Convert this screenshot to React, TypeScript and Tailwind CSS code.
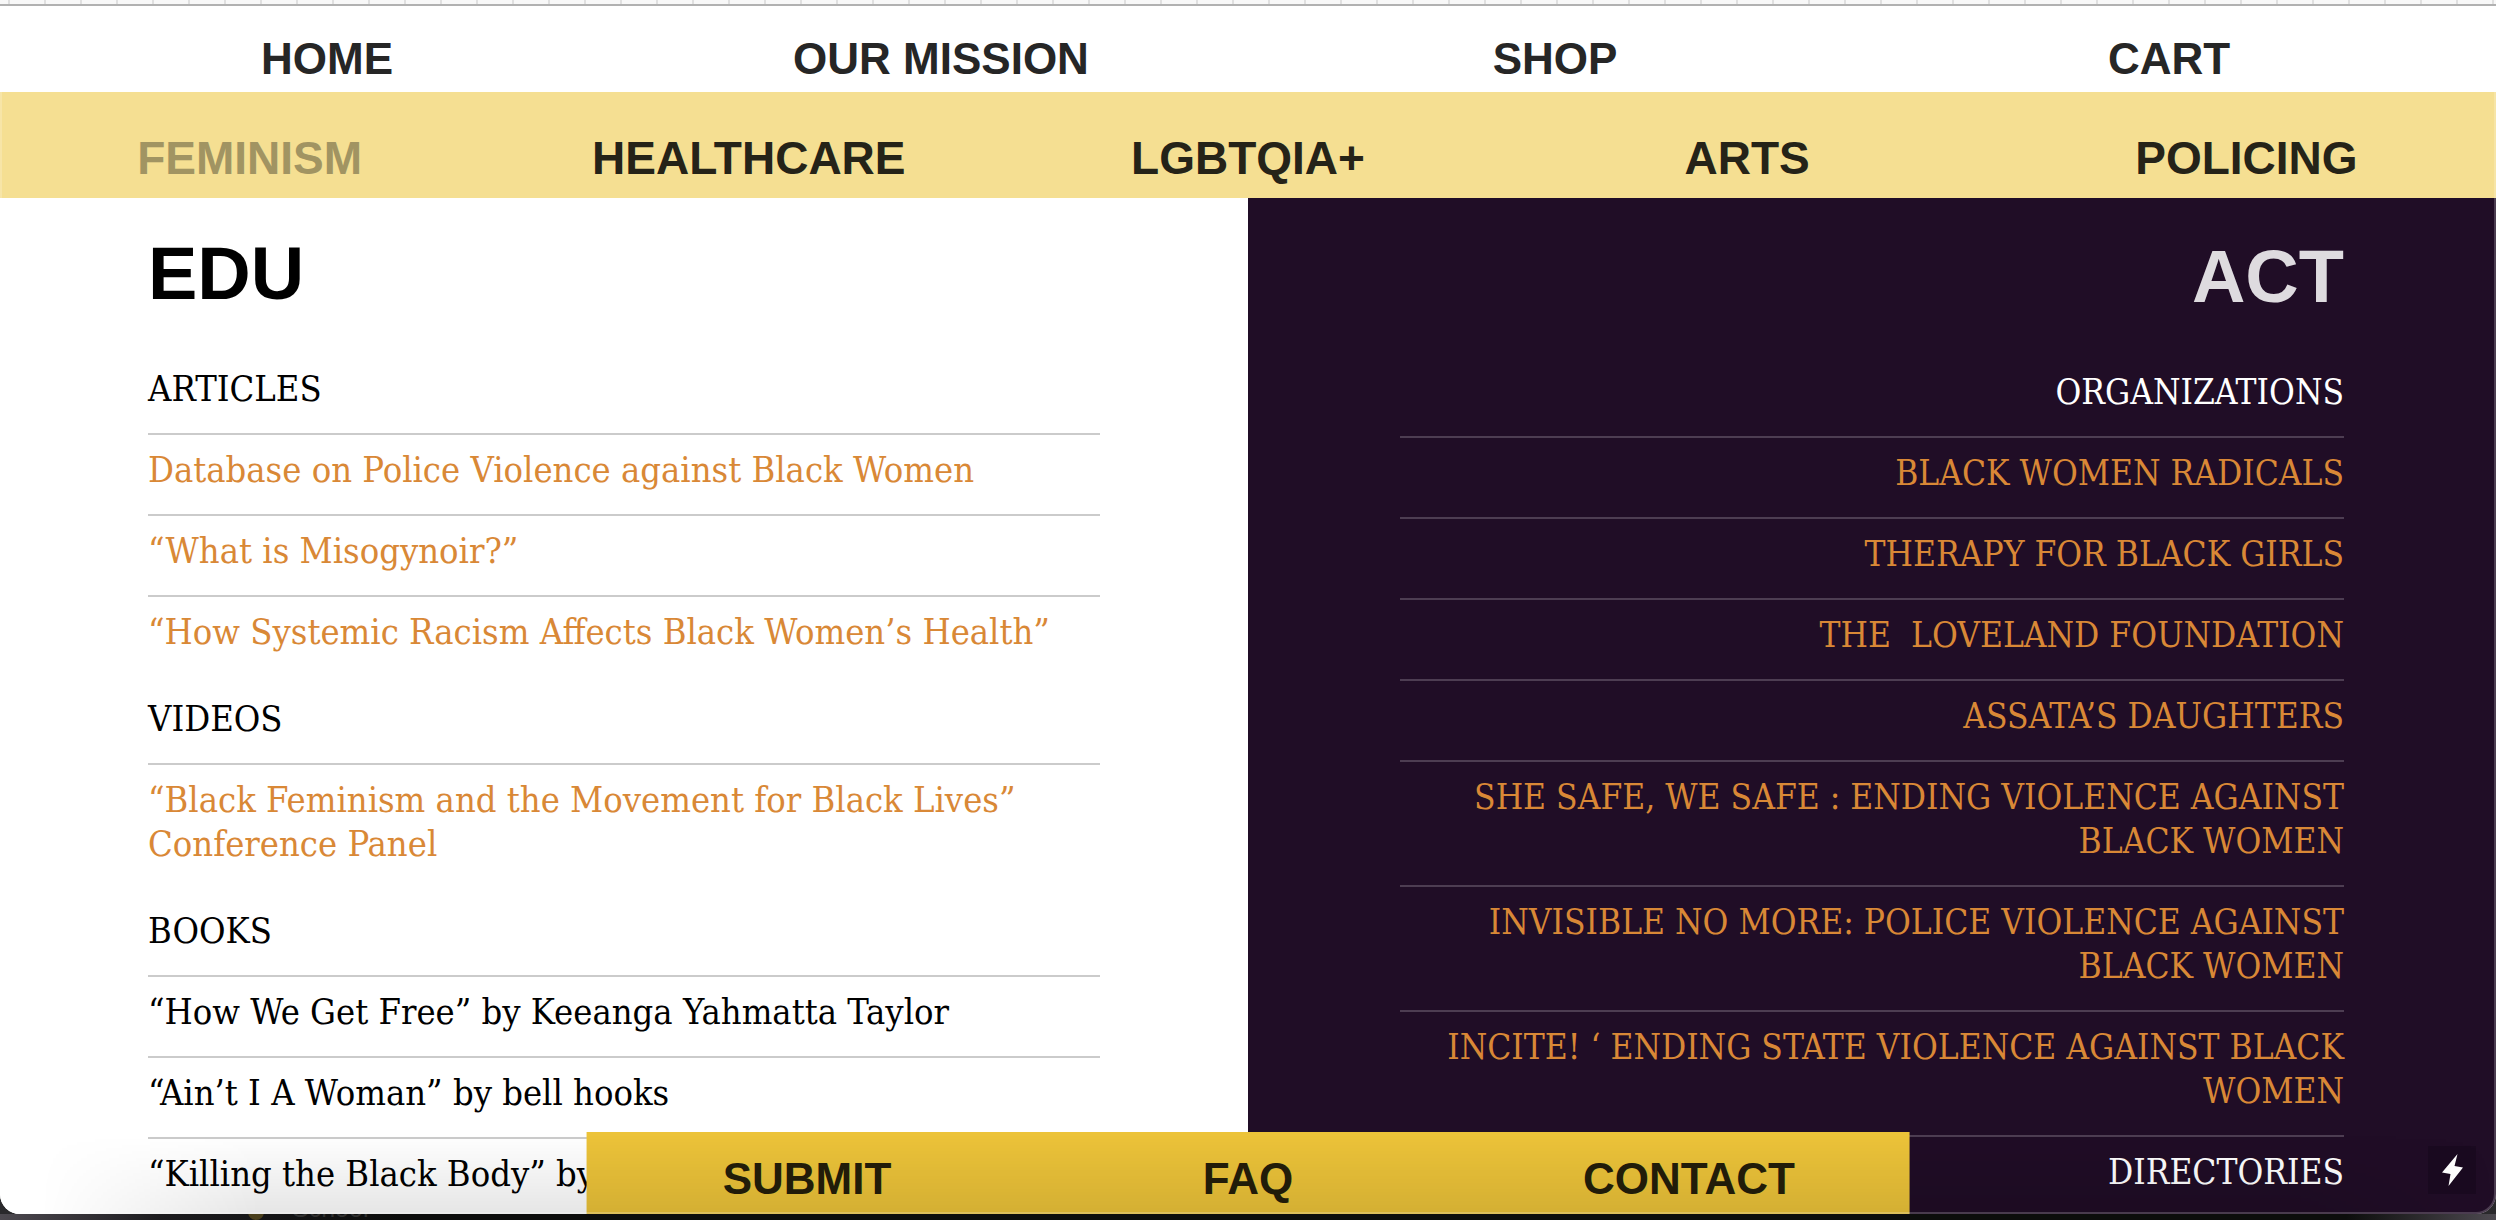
const mainLinks = ["HOME", "OUR MISSION", "SHOP", "CART"];
const topics = ["FEMINISM", "HEALTHCARE", "LGBTQIA+", "ARTS", "POLICING"];
const footerLinks = ["SUBMIT", "FAQ", "CONTACT"];

type Item = { text: string; kind?: "link" | "plain" };

const eduSections: { title: string; items: Item[] }[] = [
  {
    title: "ARTICLES",
    items: [
      { text: "Database on Police Violence against Black Women", kind: "link" },
      { text: "“What is Misogynoir?”", kind: "link" },
      { text: "“How Systemic Racism Affects Black Women’s Health”", kind: "link" },
    ],
  },
  {
    title: "VIDEOS",
    items: [{ text: "“Black Feminism and the Movement for Black Lives” Conference Panel", kind: "link" }],
  },
  {
    title: "BOOKS",
    items: [
      { text: "“How We Get Free” by Keeanga Yahmatta Taylor" },
      { text: "“Ain’t I A Woman” by bell hooks" },
      { text: "“Killing the Black Body” by" },
    ],
  },
];

const actSections: { title: string; items: Item[] }[] = [
  {
    title: "ORGANIZATIONS",
    items: [
      { text: "BLACK WOMEN RADICALS", kind: "link" },
      { text: "THERAPY FOR BLACK GIRLS", kind: "link" },
      { text: "THE \u00a0LOVELAND FOUNDATION", kind: "link" },
      { text: "ASSATA’S DAUGHTERS", kind: "link" },
      { text: "SHE SAFE, WE SAFE : ENDING VIOLENCE AGAINST BLACK WOMEN", kind: "link" },
      { text: "INVISIBLE NO MORE: POLICE VIOLENCE AGAINST BLACK WOMEN", kind: "link" },
      { text: "INCITE! ‘ ENDING STATE VIOLENCE AGAINST BLACK WOMEN", kind: "link" },
      { text: "DIRECTORIES" },
    ],
  },
];

const Sections = ({ sections, line }: { sections: { title: string; items: Item[] }[]; line: string }) => (
  <>
    {sections.map((section) => (
      <section key={section.title}>
        <h3 className="pt-[21px] pb-[22px]">{section.title}</h3>
        <ul>
          {section.items.map((item) => (
            <li key={item.text} className={`border-t-2 pt-[13px] pb-[22px] ${line}`}>
              {item.kind === "link" ? (
                <a href="#" className="text-[#d98836]">
                  {item.text}
                </a>
              ) : (
                item.text
              )}
            </li>
          ))}
        </ul>
      </section>
    ))}
  </>
);

const Header = () => (
  <header className="font-bold leading-[48px]">
    <nav className="grid grid-cols-4 bg-white px-5 pt-[29px] pb-[9px] text-center text-[44px] text-[#262626]">
      {mainLinks.map((label) => (
        <a key={label} href="#">
          {label}
        </a>
      ))}
    </nav>
    <nav className="grid grid-cols-5 bg-[#f5df92] pt-[42px] pb-4 text-center text-[46px] text-[#252318]">
      {topics.map((label, i) => (
        <a key={label} href="#" className={i === 0 ? "text-[#a19462]" : ""}>
          {label}
        </a>
      ))}
    </nav>
  </header>
);

const App = () => {
  return (
    <div className="flex h-screen flex-col overflow-hidden bg-[#2a292c] font-['Liberation_Sans',sans-serif]">
      {/* Edge of the toolbar above the page */}
      <div className="h-[6px] shrink-0 border-b-2 border-[#b1b1b1] bg-[repeating-linear-gradient(90deg,#f8f8f8_0_8px,#e0e0e0_8px_10px,#f8f8f8_10px_36px)]" />

      <div className="relative flex min-h-0 flex-1 flex-col overflow-hidden rounded-b-[20px] bg-white">
        <Header />

        <main className="grid min-h-0 flex-1 grid-cols-2 overflow-hidden font-['DejaVu_Serif_Condensed','DejaVu_Serif',serif] leading-[44px]">
          <div className="bg-white px-[148px] pt-9 text-[36px] text-black">
            <h2 className="mb-8 font-['Liberation_Sans',sans-serif] text-[74px] leading-[80px] font-bold">EDU</h2>
            <Sections sections={eduSections} line="border-[#cbcbcb]" />
          </div>
          <div className="bg-[#200d26] px-[152px] pt-[39px] text-right text-[35px] text-white">
            <h2 className="mb-8 font-['Liberation_Sans',sans-serif] text-[74px] leading-[80px] font-bold text-[#dedbdf]">
              ACT
            </h2>
            <Sections sections={actSections} line="border-[#4d3d52]" />
          </div>
        </main>

        {/* Floating footer menu */}
        <nav className="absolute bottom-0 left-1/2 grid w-[53%] -translate-x-1/2 grid-cols-3 bg-[#ecc339] pt-[23px] pb-[11px] text-center text-[44px] leading-[48px] font-bold text-[#241e0a]">
          {footerLinks.map((label) => (
            <a key={label} href="#">
              {label}
            </a>
          ))}
        </nav>

        <button
          type="button"
          aria-label="Quick actions"
          className="absolute right-5 bottom-5 flex size-12 items-center justify-center bg-[#1a0a20]"
        >
          <svg viewBox="0 0 48 48" className="size-12" fill="#fff">
            <path d="M29.5 8 14 26.5 22.5 28 20.5 40 35 21.5 26.5 20Z" />
          </svg>
        </button>

        {/* Window shadow and hairline edge */}
        <div className="pointer-events-none absolute inset-x-0 bottom-0 h-20 bg-linear-to-t from-black/10 to-transparent mask-[linear-gradient(90deg,transparent_40px,#000_260px,#000_92%,transparent)]" />
        <div className="pointer-events-none absolute inset-0 rounded-b-[20px] border-x-2 border-b-2 border-white/20" />
      </div>

      {/* Sliver of the window behind */}
      <div className="flex h-[6px] shrink-0 items-end gap-7 overflow-hidden bg-[linear-gradient(90deg,#4d4950,#1d1c1f_160px,#0c0d0c_400px,#0c0d0c_94%,#4d4950)] pl-[248px] text-[25px] leading-[24px] text-[#303030]">
        <span className="size-4 shrink-0 rounded-full bg-[#4a3f1c]" />
        <span>School</span>
      </div>
    </div>
  );
};

export default App;
